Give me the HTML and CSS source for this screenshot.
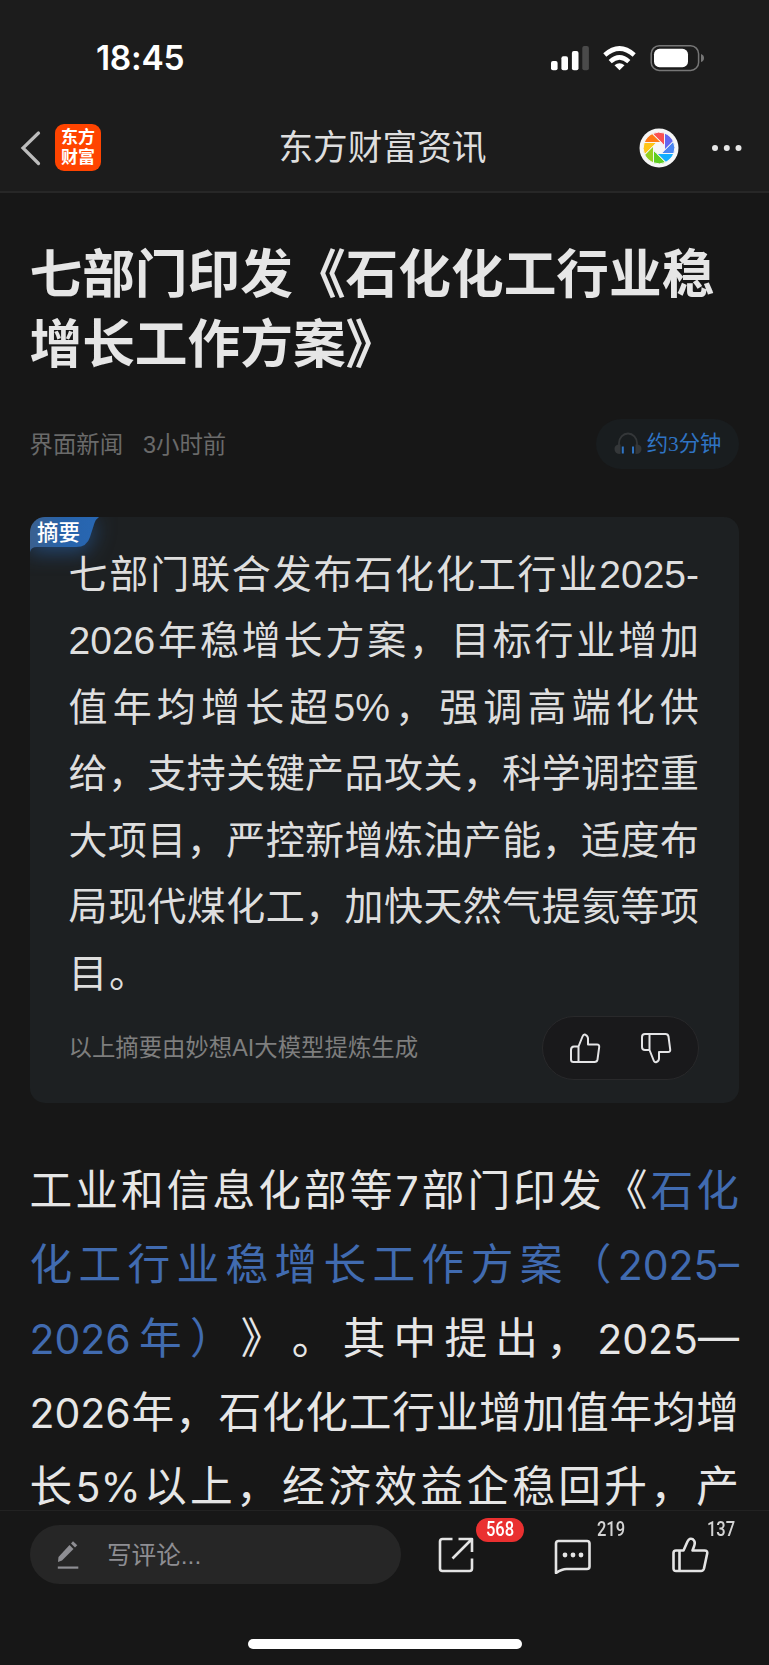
FILE: index.html
```
<!DOCTYPE html>
<html lang="zh-CN">
<head>
    <meta charset="UTF-8">
    <meta name="viewport" content="width=device-width, initial-scale=1.0">
    <title>东方财富资讯</title>
    <link rel="stylesheet" href="styles.css">
</head>
<body>
    <header class="header">
        <div class="status-bar">
            <span class="time">18:45</span>
            <svg class="status-icons" width="154" height="28" viewBox="550 43 154 28">
                <g fill="#fff">
                    <rect x="551" y="60" width="6.6" height="9.3" rx="2"/>
                    <rect x="561.4" y="55.3" width="6.6" height="14" rx="2"/>
                    <rect x="571.9" y="50" width="6.6" height="19.3" rx="2"/>
                    <rect x="582.3" y="45" width="6.6" height="24.3" rx="2" fill="#4a4a4a"/>
                    <path d="M619.5 69.3l-5-5q5-4 10 0z"/>
                </g>
                <g fill="none" stroke="#fff" stroke-width="4.6">
                    <path d="M604.8 54q14.7-13 29.4 0"/>
                    <path d="M610.2 60.6q9.3-8.4 18.6 0"/>
                </g>
                <rect x="651.2" y="44.8" width="47.4" height="24.6" rx="8" fill="none" stroke="#767676" stroke-width="1.5"/>
                <rect x="654" y="47.8" width="34" height="18.4" rx="5.5" fill="#fff"/>
                <path d="M701 53q3 1 3 4t-3 4z" fill="#767676"/>
            </svg>
        </div>
        <div class="nav-bar">
            <div class="nav-left">
                <svg width="22" height="36" viewBox="0 0 22 36" fill="none" stroke="#bcbcbc" stroke-width="3.2" stroke-linecap="round">
                    <path d="M18.5 3L3 18l15.5 15.5"/>
                </svg>
                <div class="logo"><span>东方</span><span>财富</span></div>
            </div>
            <h2 class="nav-title">东方财富资讯</h2>
            <div class="nav-right">
                <svg width="40" height="40" viewBox="-20 -20 40 40">
                    <defs>
                        <path id="petal" d="M5.5-2.3V-14.9A16 16 0 0 0-6.6-14.4L2.3-5.5Z"/>
                    </defs>
                    <circle r="19.5" fill="#f6f6f6"/>
                    <g stroke="#f6f6f6" stroke-width="1">
                        <use href="#petal" fill="#fa5151"/>
                        <use href="#petal" fill="#6467f0" transform="rotate(45)"/>
                        <use href="#petal" fill="#4a86f2" transform="rotate(90)"/>
                        <use href="#petal" fill="#10aeff" transform="rotate(135)"/>
                        <use href="#petal" fill="#5fce22" transform="rotate(180)"/>
                        <use href="#petal" fill="#95d020" transform="rotate(225)"/>
                        <use href="#petal" fill="#ffc516" transform="rotate(270)"/>
                        <use href="#petal" fill="#ff7a14" transform="rotate(315)"/>
                    </g>
                </svg>
                <svg width="32" height="8" viewBox="0 0 32 8" fill="#e6e6e6">
                    <circle cx="4" cy="4" r="3"/>
                    <circle cx="15.8" cy="4" r="3"/>
                    <circle cx="27.5" cy="4" r="3"/>
                </svg>
            </div>
        </div>
    </header>

    <main class="article">
        <h1 class="title">七部门印发《石化化工行业稳增长工作方案》</h1>
        <div class="meta">
            <div class="source"><span>界面新闻</span><span>3小时前</span></div>
            <div class="listen">
                <svg width="28" height="24" viewBox="0 0 28 24">
                    <path d="M5 14V11a9 9.5 0 0 1 18 0v3" fill="none" stroke="#343739" stroke-width="1.8"/>
                    <path d="M6.5 12.5v9.5q-6 0-6-5t6-4.5zM21.5 12.5v9.5q6 0 6-5t-6-4.5z" fill="#343739"/>
                    <path d="M8.800 14.5v7M19 14.5v7" stroke="#2f74c4" stroke-width="2"/>
                </svg>
                <span>约3分钟</span>
            </div>
        </div>

        <section class="summary">
            <div class="tag">
                <svg width="69" height="36" viewBox="0 0 69 36">
                    <defs>
                        <linearGradient id="tagFill" x1="0" x2="1" y1="0" y2="0">
                            <stop offset="0" stop-color="#3a608f"/>
                            <stop offset="0.5" stop-color="#2763ab"/>
                            <stop offset="1" stop-color="#2867b3"/>
                        </linearGradient>
                    </defs>
                    <path d="M0 13Q0 0 13 0H69Q66 2 64.5 6L60 20Q57 30 46 30H7Q1 30 0 35Z" fill="url(#tagFill)"/>
                </svg>
                <span>摘要</span>
            </div>
            <p class="summary-text">七部门联合发布石化化工行业2025-<br>2026年稳增长方案，目标行业增加<br>值年均增长超5%，强调高端化供<br>给，支持关键产品攻关，科学调控重<br>大项目，严控新增炼油产能，适度布<br>局现代煤化工，加快天然气提氦等项<br><span class="last">目。</span></p>
            <div class="summary-foot">
                <span>以上摘要由妙想AI大模型提炼生成</span>
                <div class="vote">
                    <svg width="32" height="32" viewBox="0 0 32 32">
                        <path d="M9.5 30V14.5L13.5 4.5Q14.5 2 16.5 2.800Q19 4 19 6.5V12.5H28Q30.5 12.5 30.2 15L28.5 27.5Q28 30 25.5 30H4.5Q2 30 2 27.5V18Q2 14.5 5 14.5H9.5"/>
                    </svg>
                    <svg width="32" height="32" viewBox="0 0 32 32">
                        <path d="M9.5 2V18L13.5 28Q14.5 30.8 16.5 30Q19 29 19 26.5V20H28Q30.5 20 30.2 17.5L28.5 4.5Q28 2 25.5 2H5Q2 2 2 5V15Q2 18 5 18H9.5"/>
                    </svg>
                </div>
            </div>
        </section>

        <p class="content">工业和信息化部等<span class="num">7</span>部门印发《<a>石化</a><br><a>化工行业稳增长工作方案（<span class="num">2025–</span></a><br><a><span class="num">2026</span>年）</a>》。其中提出，<span class="num">2025—</span><br><span class="num">2026</span>年，石化化工行业增加值年均增<br>长<span class="num">5%</span>以上，经济效益企稳回升，产</p>
    </main>

    <footer class="toolbar">
        <div class="comment-box">
            <svg width="22" height="30" viewBox="0 0 22 30" fill="#8e8e93">
                <path d="M1 22L1.5 17L12.5 5L16.5 9L5 20.5Z"/>
                <path d="M14 3.5L16 1.3L20.3 5.3L18 7.5Z"/>
                <rect x="0.8" y="26.5" width="20.5" height="2.2"/>
            </svg>
            <span>写评论...</span>
        </div>
        <div class="action share">
            <svg width="38" height="38" viewBox="0 0 38 38">
                <path d="M15.5 3H5.5Q3 3 3 5.5V32.5Q3 35 5.5 35H32.5Q35 35 35 32.5V22.5"/>
                <path d="M21.5 3H35V16M34.5 3.5L15.5 22.5"/>
            </svg>
            <span class="count badge"><b>568</b></span>
        </div>
        <div class="action">
            <svg width="38" height="38" viewBox="0 0 38 38">
                <path d="M4.5 5H33Q35.500 5 35.500 7.500V30.5Q35.500 33 33 33H12.500Q8 33 2 37V7.500Q2 5 4.500 5Z"/>
                <g class="dots"><circle cx="11" cy="19" r="2.4"/><circle cx="19" cy="19" r="2.4"/><circle cx="27" cy="19" r="2.4"/></g>
            </svg>
            <span class="count"><b>219</b></span>
        </div>
        <div class="action like">
            <svg width="38" height="38" viewBox="0 0 38 38">
                <path d="M8.5 35V14.5H12.5L16.5 5.5Q18.5 1.5 21.8 3.2Q25 5.5 23 10.5L21.5 14.5H33.5Q36.8 14.5 36.2 17.5L33 32.5Q32.3 35 30 35H5Q2.5 35 2.5 32.5V17Q2.5 14.5 5 14.5H8.5"/>
            </svg>
            <span class="count"><b>137</b></span>
        </div>
    </footer>
    <div class="home-indicator"></div>
</body>
</html>
```
FILE: styles.css
```
* {
    box-sizing: border-box;
}
body {
    margin: 0;
    height: 1665px;
    overflow: hidden;
    display: flex;
    flex-direction: column;
    background-color: #171717;
    color: #e6e6e6;
    font-family: "Liberation Sans", "Noto Sans CJK SC", sans-serif;
    text-spacing-trim: space-all;
}
h1, h2, p {
    margin: 0;
}
svg {
    display: block;
    flex-shrink: 0;
}
.header {
    height: 193px;
    flex-shrink: 0;
    background-color: #1c1c1c;
    border-bottom: 2px solid #272727;
}
.status-bar {
    height: 103px;
    padding: 13px 65px 0 96px;
    display: flex;
    align-items: center;
    justify-content: space-between;
}
.time {
    font: 600 33.5px/40px Inter, sans-serif;
    color: #fff;
    letter-spacing: -0.3px;
}
.nav-bar {
    height: 88px;
    padding: 1px 26px 0 20px;
    display: grid;
    grid-template-columns: 1fr auto 1fr;
    align-items: center;
}
.nav-left, .nav-right {
    display: flex;
    align-items: center;
}
.nav-left {
    gap: 13px;
}
.nav-right {
    justify-content: flex-end;
    gap: 32px;
}
.logo {
    width: 46px;
    height: 47px;
    padding-top: 4px;
    border-radius: 9px;
    background-color: #ff4400;
    color: #fff;
    font-weight: bold;
    font-size: 17px;
    line-height: 19.5px;
    display: flex;
    flex-direction: column;
    align-items: center;
}
.nav-title {
    padding: 1px 0 0 2px;
    font-size: 34.7px;
    font-weight: normal;
    line-height: 50px;
    color: #dedede;
}
.article {
    height: 1317px;
    flex-shrink: 0;
    padding: 47px 30px 0 29.5px;
}
.title {
    font-size: 52.7px;
    line-height: 70px;
    font-weight: bold;
    margin-right: -10px;
}
.meta {
    margin-top: 39px;
    height: 50px;
    display: flex;
    justify-content: space-between;
    align-items: center;
    font-size: 23.4px;
    color: #6a6a6a;
}
.source {
    display: flex;
    gap: 20px;
    padding-bottom: 3px;
}
.listen {
    width: 143px;
    height: 50px;
    border-radius: 25px;
    background-color: #191d1f;
    color: #2f74c4;
    font-family: "Liberation Serif", "Noto Sans CJK SC", serif;
    font-size: 21.3px;
    display: flex;
    align-items: center;
    justify-content: center;
    gap: 5px;
}
.listen span {
    padding-bottom: 5px;
}
.summary {
    position: relative;
    margin-top: 48px;
    height: 586px;
    padding: 24.5px 40px 0 39px;
    border-radius: 15px;
    background-color: #1d2022;
    overflow: hidden;
}
.tag {
    position: absolute;
    left: 0;
    top: 0;
    color: #fff;
    font-size: 21.5px;
    font-weight: 500;
}
.tag svg {
    overflow: visible;
    filter: drop-shadow(0 5px 10px rgba(39, 99, 171, 0.6));
}
.tag span {
    position: absolute;
    left: 7.5px;
    top: 1px;
    line-height: 31px;
    white-space: nowrap;
}
.summary-text {
    position: relative;
    font-size: 39px;
    line-height: 66.5px;
    text-align: justify;
    text-align-last: justify;
    color: #dedede;
}
.last {
    display: block;
    text-align-last: left;
    letter-spacing: 1.5px;
}
.summary-foot {
    margin-top: 8.5px;
    display: flex;
    justify-content: space-between;
    align-items: center;
    font-size: 23.4px;
    color: #7e7e7e;
}
.summary-foot > span {
    padding-bottom: 3px;
}
.vote {
    width: 157px;
    height: 64px;
    border-radius: 32px;
    border: 1.5px solid #29292b;
    background-color: #19191b;
    display: flex;
    align-items: center;
    justify-content: center;
    gap: 39px;
}
.vote svg {
    fill: none;
    stroke: #e4e4e6;
    stroke-width: 2;
    stroke-linejoin: round;
}
.content {
    margin-top: 46.5px;
    font-family: "Noto Sans CJK SC", sans-serif;
    font-size: 42.7px;
    line-height: 74.2px;
    text-align: justify;
    text-align-last: justify;
    white-space: nowrap;
}
.content a {
    color: #416bb0;
}
.num {
    font-family: Inter, "Noto Sans CJK SC", sans-serif;
    font-size: 41px;
    line-height: 1;
}
.toolbar {
    height: 75px;
    flex-shrink: 0;
    border-top: 1px solid #222;
    padding: 14px 58px 0 29.5px;
    display: flex;
    align-items: flex-start;
}
.comment-box {
    width: 371px;
    height: 59px;
    border-radius: 30px;
    background-color: #262626;
    color: #8e8e93;
    font-size: 24.6px;
    padding-left: 27.5px;
    display: flex;
    align-items: center;
    gap: 28px;
}
.comment-box span {
    padding-bottom: 3px;
}
.action {
    position: relative;
    margin: 10.5px 0 0 79px;
}
.share {
    margin-left: 36px;
}
.action svg {
    fill: none;
    stroke: #e4e4e4;
    stroke-width: 2.6;
    stroke-linejoin: round;
}
.action .dots {
    fill: #e4e4e4;
    stroke: none;
}
.count {
    position: absolute;
    left: 37px;
    top: -18px;
    width: 40px;
    height: 24px;
    color: #d4d4d4;
    font: 500 19.7px/24px Roboto, sans-serif;
    text-align: center;
}
.count b {
    display: block;
    font-weight: 500;
    transform: scaleX(0.84);
}
.like .count {
    left: 30px;
}
.badge {
    left: 39px;
    width: 48px;
    border-radius: 12px;
    background-color: #ea3030;
    color: #fff;
}
.home-indicator {
    width: 274px;
    height: 10px;
    margin: 54px auto 0;
    border-radius: 5px;
    background-color: #fff;
    flex-shrink: 0;
}
```
